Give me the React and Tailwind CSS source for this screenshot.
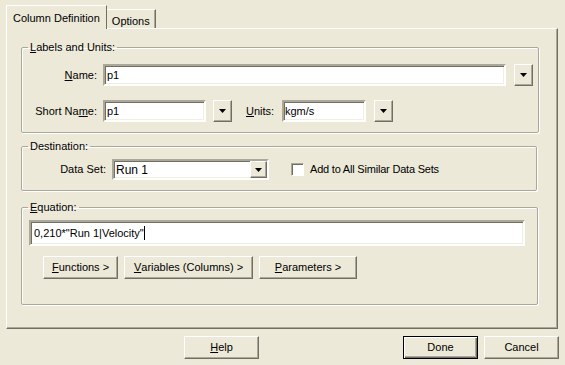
import React from "react";

const sunken =
  "border-2 border-t-[#aca899] border-l-[#aca899] border-b-white border-r-white shadow-[inset_1px_1px_0_#716f64,inset_-1px_-1px_0_#f1efe2] bg-white";
const raised =
  "border border-t-white border-l-white border-b-[#716f64] border-r-[#716f64] shadow-[inset_-1px_-1px_0_#aca899] bg-[#ece9d8]";
const group =
  "border border-[#aca899] shadow-[inset_1px_1px_0_white,1px_1px_0_white] rounded-[2px]";

function Arrow() {
  return (
    <svg width="7" height="4" viewBox="0 0 7 4">
      <path d="M0 0h7L3.5 4z" fill="#000" />
    </svg>
  );
}

function DropButton({ className = "" }) {
  return (
    <div className={`${raised} w-[19px] h-[22px] flex items-center justify-center ${className}`}>
      <Arrow />
    </div>
  );
}

function Button({ children, width, isDefault }) {
  return (
    <div
      className={`h-[23px] flex items-center justify-center ${width} ${
        isDefault
          ? "border border-black shadow-[inset_1px_1px_0_white,inset_-1px_-1px_0_#716f64,inset_-2px_-2px_0_#aca899]"
          : raised
      }`}
    >
      {children}
    </div>
  );
}

function Group({ title, className, children }) {
  return (
    <fieldset className={`${group} ${className}`}>
      <legend className="ml-[6px] px-[2px] leading-[13px]">{title}</legend>
      {children}
    </fieldset>
  );
}

export default function App() {
  return (
    <div
      className="w-[565px] h-[365px] bg-[#ece9d8] text-black text-[11px] overflow-hidden"
      style={{ fontFamily: "'Liberation Sans', Arial, sans-serif" }}
    >
      {/* Tabs */}
      <div className="flex items-end pl-[6px] pt-[4px] h-[28px]">
        <div className="h-[24px] px-[6px] pt-[4px] border-t border-l border-white border-r border-r-[#716f64] bg-[#ece9d8] relative z-10 -mb-[1px]">
          Column Definition
        </div>
        <div className="h-[19px] px-[5px] pt-[3px] border-t border-r border-t-white border-r-[#716f64] shadow-[inset_-1px_0_0_#aca899]">
          Options
        </div>
      </div>

      {/* Panel */}
      <div className="ml-[6px] w-[552px] h-[301px] border border-t-white border-l-white border-b-[#716f64] border-r-[#716f64] shadow-[inset_-1px_-1px_0_#aca899] pl-[14px] pt-[12px]">
        <Group
          className="w-[518px] h-[92px]"
          title={
            <>
              <u>L</u>abels and Units:
            </>
          }
        >
          <div className="flex items-center mt-[10px]">
            <div className="w-[81px] text-right pr-[6px]">
              <u>N</u>ame:
            </div>
            <div className={`${sunken} w-[403px] h-[22px] px-[2px] flex items-center`}>p1</div>
            <DropButton className="ml-[8px]" />
          </div>
          <div className="flex items-center mt-[14px]">
            <div className="w-[81px] text-right pr-[6px]">
              Short Na<u>m</u>e:
            </div>
            <div className={`${sunken} w-[103px] h-[22px] px-[2px] flex items-center`}>p1</div>
            <DropButton className="ml-[7px]" />
            <div className="ml-[14px] w-[36px]">
              <u>U</u>nits:
            </div>
            <div className={`${sunken} w-[84px] h-[22px] px-[1px] flex items-center`}>kgm/s</div>
            <DropButton className="ml-[8px]" />
          </div>
        </Group>

        <Group className="w-[516px] h-[51px] mt-[7px]" title="Destination:">
          <div className="flex items-center mt-[6px]">
            <div className="w-[90px] text-right pr-[6px]">Data Set:</div>
            <div className={`${sunken} w-[157px] h-[21px] flex items-center pl-[2px] text-[12px]`}>
              <span className="flex-1">Run 1</span>
              <div className={`${raised} w-[17px] h-[17px] flex items-center justify-center`}>
                <Arrow />
              </div>
            </div>
            <div className="ml-[22px] w-[13px] h-[13px] bg-white border border-t-[#aca899] border-l-[#aca899] border-b-white border-r-white shadow-[inset_1px_1px_0_#716f64]" />
            <div className="ml-[6px] tracking-[-0.2px]">Add to All Similar Data Sets</div>
          </div>
        </Group>

        <Group
          className="w-[517px] h-[104px] mt-[10px]"
          title={
            <>
              <u>E</u>quation:
            </>
          }
        >
          <div className="pl-[7px] mt-[6px]">
            <div className={`${sunken} w-[496px] h-[26px] px-[3px] flex items-center`}>
              0,210*"Run 1|Velocity"
              <span className="w-px h-[14px] bg-black" />
            </div>
          </div>
          <div className="flex gap-[6px] pl-[21px] mt-[10px]">
            <Button width="w-[75px]">
              <u>F</u>unctions &gt;
            </Button>
            <Button width="w-[129px]">
              <u>V</u>ariables (Columns) &gt;
            </Button>
            <Button width="w-[98px]">
              <u>P</u>arameters &gt;
            </Button>
          </div>
        </Group>
      </div>

      {/* Bottom buttons */}
      <div className="flex items-center mt-[7px] pl-[184px]">
        <Button width="w-[75px]">
          <u>H</u>elp
        </Button>
        <div className="ml-[144px]">
          <Button width="w-[75px]" isDefault>
            Done
          </Button>
        </div>
        <div className="ml-[6px]">
          <Button width="w-[75px]">Cancel</Button>
        </div>
      </div>
    </div>
  );
}
